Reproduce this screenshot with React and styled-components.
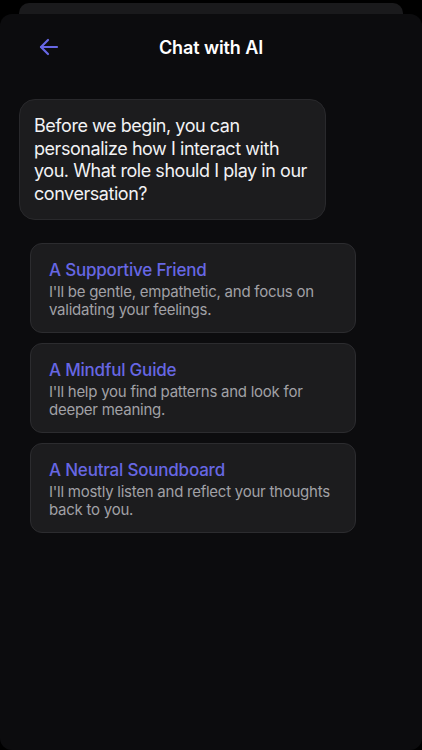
import React from 'react';
import styled, { createGlobalStyle } from 'styled-components';

const GlobalStyle = createGlobalStyle`
  html, body {
    margin: 0;
    padding: 0;
    background: #000;
  }
  body {
    font-family: Inter, "Noto Sans", "Liberation Sans", sans-serif;
    -webkit-font-smoothing: antialiased;
  }
`;

const roles = [
  {
    title: 'A Supportive Friend',
    desc: "I'll be gentle, empathetic, and focus on validating your feelings.",
  },
  {
    title: 'A Mindful Guide',
    desc: "I'll help you find patterns and look for deeper meaning.",
  },
  {
    title: 'A Neutral Soundboard',
    desc: "I'll mostly listen and reflect your thoughts back to you.",
  },
];

const BackArrow = () => (
  <svg width="24" height="24" viewBox="0 0 24 24" fill="none" stroke="#6767e4" strokeWidth="2.2" strokeLinecap="round" strokeLinejoin="round">
    <path d="M20 12H4" />
    <path d="M11 5l-7 7 7 7" />
  </svg>
);

const App = () => {
  return (
    <Page>
      <GlobalStyle />
      <BehindSheet />
      <Sheet>
        <Header>
          <BackButton aria-label="Back">
            <BackArrow />
          </BackButton>
          <Title>Chat with AI</Title>
        </Header>

        <Messages>
          <Bubble>
            Before we begin, you can personalize how I interact with you. What role should I play in our conversation?
          </Bubble>

          <Options>
            {roles.map((r) => (
              <RoleCard key={r.title}>
                <RoleTitle>{r.title}</RoleTitle>
                <RoleDesc>{r.desc}</RoleDesc>
              </RoleCard>
            ))}
          </Options>
        </Messages>
      </Sheet>
    </Page>
  );
};

const Page = styled.div`
  width: 422px;
  height: 750px;
  background: #000;
  padding-top: 3px;
  box-sizing: border-box;
  display: flex;
  flex-direction: column;
  overflow: hidden;
`;

const BehindSheet = styled.div`
  height: 11px;
  margin: 0 19px;
  background: #1a1a1c;
  border-radius: 10px 10px 0 0;
  flex-shrink: 0;
`;

const Sheet = styled.div`
  flex: 1;
  background: #0c0c0e;
  border-radius: 12px;
  display: flex;
  flex-direction: column;
`;

const Header = styled.div`
  position: relative;
  height: 40px;
  margin-top: 13px;
  display: flex;
  align-items: center;
  justify-content: center;
`;

const BackButton = styled.button`
  position: absolute;
  left: 37px;
  top: 8px;
  padding: 0;
  border: none;
  background: none;
  display: flex;
`;

const Title = styled.h1`
  margin: 0;
  color: #fff;
  font-size: 18px;
  font-weight: 600;
  letter-spacing: -0.1px;
`;

const Messages = styled.div`
  display: flex;
  flex-direction: column;
  padding-top: 32px;
`;

const Bubble = styled.div`
  margin-left: 19px;
  width: 307px;
  box-sizing: border-box;
  padding: 15px 12px 13px 14px;
  background: #1c1c1e;
  border: 1px solid #29292c;
  border-radius: 16px;
  color: #f2f2f4;
  font-size: 18px;
  line-height: 22.7px;
  letter-spacing: -0.45px;
`;

const Options = styled.div`
  display: flex;
  flex-direction: column;
  gap: 10px;
  margin: 23px 0 0 30px;
  width: 326px;
`;

const RoleCard = styled.div`
  box-sizing: border-box;
  height: 90px;
  padding: 15px 18px 14px;
  background: #1c1c1e;
  border: 1px solid #2c2c2f;
  border-radius: 12px;
  display: flex;
  flex-direction: column;
`;

const RoleTitle = styled.div`
  color: #6767e4;
  font-size: 17px;
  font-weight: 500;
  line-height: 22px;
  letter-spacing: -0.2px;
`;

const RoleDesc = styled.div`
  margin-top: 2px;
  color: #a1a1a6;
  font-size: 15px;
  line-height: 18.5px;
  letter-spacing: -0.25px;
`;

export default App;
